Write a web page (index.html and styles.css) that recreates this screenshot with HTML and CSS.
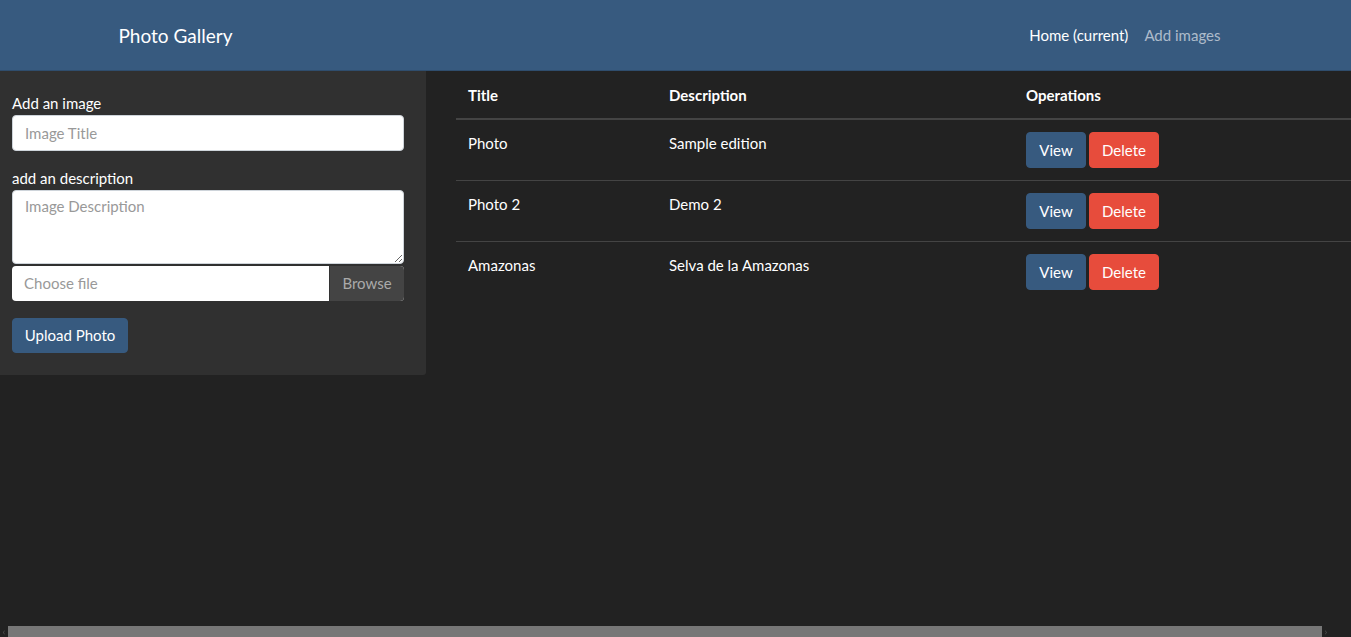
FILE: index.html
```html
<!DOCTYPE html>
<html lang="en">
<head>
<meta charset="utf-8">
<title>Photo Gallery</title>
<link rel="stylesheet" href="styles.css">
</head>
<body>
<nav class="navbar">
  <div class="nav-inner">
    <a class="brand" href="#">Photo Gallery</a>
    <ul class="nav-links">
      <li><a class="nav-link active" href="#">Home (current)</a></li>
      <li><a class="nav-link" href="#">Add images</a></li>
    </ul>
  </div>
</nav>
<main class="main">
  <aside class="panel">
    <form class="upload-form">
      <div class="form-group">
        <label class="label">Add an image</label>
        <input class="control" type="text" placeholder="Image Title">
      </div>
      <div class="form-group">
        <label class="label">add an description</label>
        <textarea class="control textarea" placeholder="Image Description"></textarea>
        <div class="file-input">
          <span class="file-name">Choose file</span>
          <span class="file-browse">Browse</span>
        </div>
      </div>
      <button class="btn btn-primary btn-upload" type="button">Upload Photo</button>
    </form>
  </aside>
  <section class="table-wrap">
    <table class="table">
      <thead>
        <tr>
          <th class="col-title">Title</th>
          <th class="col-desc">Description</th>
          <th>Operations</th>
        </tr>
      </thead>
      <tbody>
        <tr>
          <td>Photo</td>
          <td>Sample edition</td>
          <td><div class="ops"><button class="btn btn-primary btn-view">View</button><button class="btn btn-danger">Delete</button></div></td>
        </tr>
        <tr>
          <td>Photo 2</td>
          <td>Demo 2</td>
          <td><div class="ops"><button class="btn btn-primary btn-view">View</button><button class="btn btn-danger">Delete</button></div></td>
        </tr>
        <tr>
          <td>Amazonas</td>
          <td>Selva de la Amazonas</td>
          <td><div class="ops"><button class="btn btn-primary btn-view">View</button><button class="btn btn-danger">Delete</button></div></td>
        </tr>
      </tbody>
    </table>
  </section>
</main>
<div class="hscroll" aria-hidden="true">
  <span class="hscroll-arrow">&#8249;</span>
  <div class="hscroll-thumb"></div>
  <span class="hscroll-arrow">&#8250;</span>
</div>
</body>
</html>
```
FILE: styles.css
```css
html {
  background: #222;
}
body {
  margin: 0;
  background: #222;
  color: #fff;
  font-family: Lato, "Liberation Sans", sans-serif;
  font-size: 15px;
  line-height: 1.5;
  overflow: hidden;
}

.navbar {
  background: #375a7f;
  height: 71px;
  width: 1351px;
  border-bottom: 1px solid #2f4d6d;
  box-sizing: border-box;
}
.nav-inner {
  width: 1140px;
  margin: 0 auto;
  padding: 0 15px;
  box-sizing: border-box;
  height: 100%;
  display: flex;
  align-items: center;
  justify-content: space-between;
  position: relative;
  left: -2px;
}
.brand {
  color: #fff;
  text-decoration: none;
  font-size: 19px;
  line-height: 1;
}
.nav-links {
  list-style: none;
  margin: 0;
  padding: 0;
  display: flex;
}
.nav-link {
  display: block;
  padding: 0 8px;
  color: rgba(255, 255, 255, 0.6);
  text-decoration: none;
  font-size: 15px;
}
.nav-link.active {
  color: #fff;
}

.main {
  display: flex;
  align-items: flex-start;
}
.panel {
  width: 426px;
  flex: none;
  background: #303030;
  padding: 21px 22px 22px 12px;
  box-sizing: border-box;
  border-bottom-right-radius: 3px;
}
.form-group {
  margin-bottom: 17px;
}
.form-group:first-child {
  margin-bottom: 16px;
}
.label {
  display: block;
  line-height: 22px;
  margin-bottom: 1px;
}
.control {
  display: block;
  width: 100%;
  box-sizing: border-box;
  height: 36px;
  padding: 6px 12px;
  border: 1px solid #ced4da;
  border-radius: 4px;
  background: #fff;
  font-family: Lato, "Liberation Sans", sans-serif;
  font-size: 15px;
  color: #444;
  outline: none;
}
.control::placeholder {
  color: #999;
}
.textarea {
  height: 74px;
  resize: vertical;
}
.file-input {
  margin-top: 2px;
  display: flex;
  height: 35px;
  border-radius: 4px;
  overflow: hidden;
  background: #fff;
}
.file-name {
  flex: 1;
  padding: 0 12px;
  line-height: 35px;
  color: #999;
}
.file-browse {
  width: 74px;
  text-align: center;
  line-height: 35px;
  background: #444;
  color: #aaa;
  border-left: 1px solid #333;
}

.btn {
  display: inline-block;
  box-sizing: border-box;
  border: 1px solid transparent;
  border-radius: 4px;
  padding: 0;
  height: 36px;
  font-family: Lato, "Liberation Sans", sans-serif;
  font-size: 15px;
  line-height: 34px;
  color: #fff;
  text-align: center;
  white-space: nowrap;
  cursor: pointer;
}
.btn-upload {
  width: 116px;
  height: 35px;
  line-height: 33px;
}
.btn-primary {
  background: #375a7f;
  border-color: #375a7f;
}
.btn-danger {
  background: #e74c3c;
  border-color: #e74c3c;
  width: 70px;
}
.btn-view {
  width: 60px;
}
.ops {
  display: flex;
  gap: 3px;
}

.table-wrap {
  margin-left: 30px;
  width: 916px;
  flex: none;
}
.table {
  width: 100%;
  border-collapse: collapse;
}
.table th,
.table td {
  text-align: left;
  vertical-align: top;
  padding: 12px;
  line-height: 22px;
}
.table th {
  font-weight: 700;
  padding: 13px 12px 12px;
  border-bottom: 2px solid #444;
}
.table tbody tr + tr td {
  border-top: 1px solid #444;
}
.col-title {
  width: 177px;
}
.col-desc {
  width: 333px;
}

.hscroll {
  position: fixed;
  left: 0;
  right: 0;
  bottom: 0;
  height: 11px;
  background: #222;
  display: flex;
  align-items: stretch;
}
.hscroll-arrow {
  width: 8px;
  font-size: 10px;
  line-height: 11px;
  color: #555;
  text-align: center;
}
.hscroll-thumb {
  width: 1314px;
  background: #777;
}
```
